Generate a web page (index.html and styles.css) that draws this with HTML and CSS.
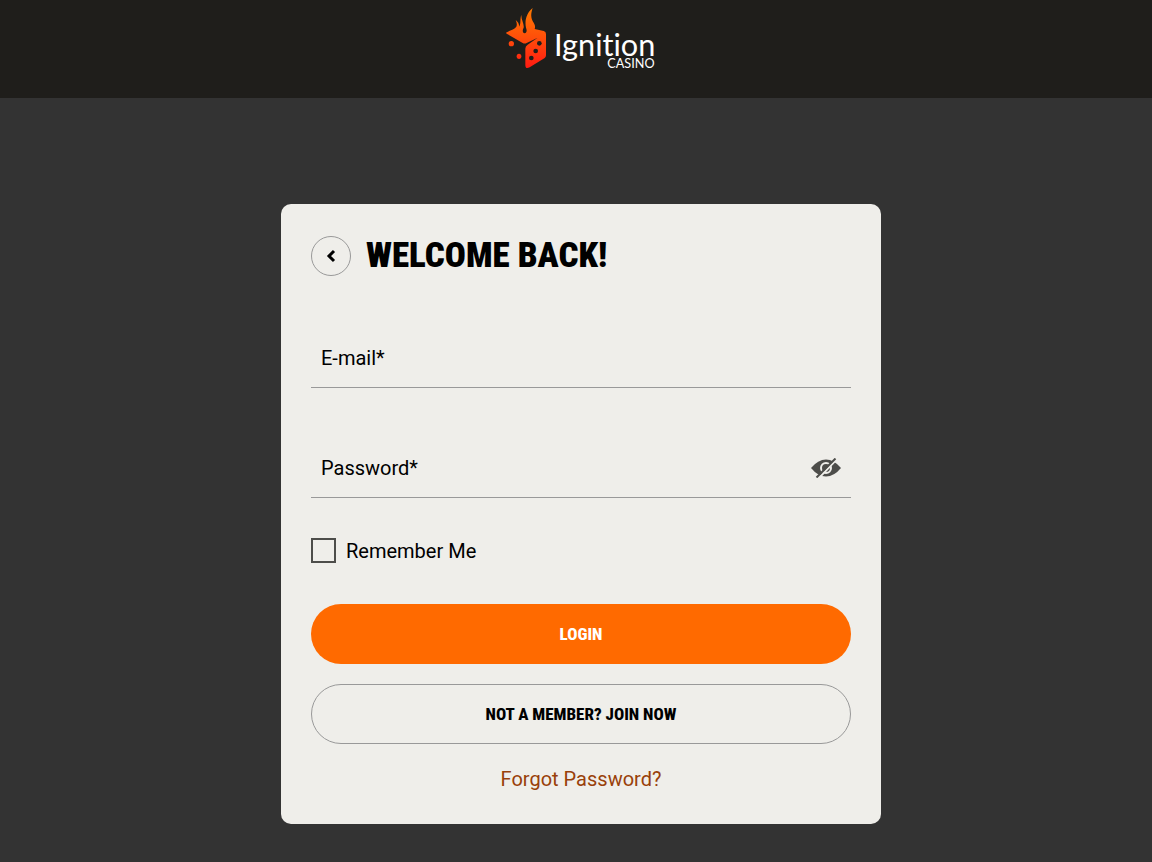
FILE: index.html
```html
<!DOCTYPE html>
<html lang="en">
<head>
  <meta charset="UTF-8">
  <meta name="viewport" content="width=device-width, initial-scale=1.0">
  <title>Login - Ignition Casino</title>
  <link rel="stylesheet" href="styles.css">
</head>
<body>
  <header class="header">
    <svg class="logo" viewBox="30 24 450 180" role="img" aria-label="Ignition Casino">
      <defs>
        <linearGradient id="flame" x1="0" y1="24" x2="0" y2="204" gradientUnits="userSpaceOnUse">
          <stop offset="0" stop-color="#ff7a00"/>
          <stop offset="0.5" stop-color="#ff4d0a"/>
          <stop offset="1" stop-color="#ff1a12"/>
        </linearGradient>
      </defs>
      <g fill="url(#flame)">
        <path d="M30 98C40 91 56 89 61 80C64 73 62 67 59 60C67 67 70 72 69 80C76 70 71 58 76 44C75 60 85 70 83 83C79 90 79 99 86 100C93 99 93 90 90 83C85 60 93 38 110 24C103 44 105 58 113 68C118 76 118 82 116 87L143 93Q150 95 150 102V166Q150 172 145 175L101 202Q88 209 88 195V146Q88 138 95 134L125 113L92 129Q86 132 80 129L32 101Q29 99 30 98Z"/>
        <circle cx="46" cy="131" r="8"/>
        <ellipse cx="69" cy="169" rx="7" ry="8"/>
      </g>
      <g fill="#1f1e1b">
        <circle cx="130" cy="130" r="7"/>
        <circle cx="119" cy="153" r="7"/>
        <circle cx="106" cy="174" r="7"/>
      </g>
      <text class="logo-name" x="174" y="167">Ignition</text>
      <text class="logo-sub" x="334" y="203">CASINO</text>
    </svg>
  </header>
  <main class="container">
    <form class="login-box" onsubmit="return false">
      <div class="title-row">
        <button class="back-btn" type="button" aria-label="Back">
          <svg viewBox="0 0 16 16"><path d="M11 3L6 8L11 13"/></svg>
        </button>
        <h1>WELCOME BACK!</h1>
      </div>
      <div class="field">
        <label for="email">E-mail*</label>
        <input type="email" id="email">
      </div>
      <div class="field">
        <label for="password">Password*</label>
        <input type="password" id="password">
        <button class="eye-btn" type="button" aria-label="Show password">
          <svg viewBox="0 0 30 20">
            <path class="eye" d="M0 10Q7 1.500 15 1.500T30 10Q23 18.500 15 18.500T0 10Z"/>
            <circle class="ring" cx="15" cy="10" r="5"/>
            <path class="gap" d="M7 21L26 1"/>
            <path class="slash" d="M5.500 19.500L24.500 .5"/>
          </svg>
        </button>
      </div>
      <div class="remember">
        <input type="checkbox" id="remember">
        <label for="remember">Remember Me</label>
      </div>
      <div class="actions">
        <button class="btn login-btn" type="submit">LOGIN</button>
        <button class="btn join-btn" type="button">NOT A MEMBER? JOIN NOW</button>
        <a class="forgot" href="#">Forgot Password?</a>
      </div>
    </form>
  </main>
</body>
</html>
```
FILE: styles.css
```css
* {
  box-sizing: border-box;
}
body {
  margin: 0;
  min-height: 100vh;
  background: #333;
  color: #000;
  font-family: Roboto, "Liberation Sans", sans-serif;
  font-size: 20px;
  line-height: 30px;
}
.header {
  display: flex;
  justify-content: center;
  height: 98px;
  padding: 8px 0 0 10px;
  background: #1f1e1b;
}
.logo {
  width: 150px;
  height: 60px;
  overflow: visible;
}
.logo-name,
.logo-sub {
  fill: #fff;
  font-family: Lato, sans-serif;
  font-variant-ligatures: none;
}
.logo-name {
  font-size: 92px;
}
.logo-sub {
  font-size: 38px;
}
.container {
  display: flex;
  justify-content: center;
  padding: 106px 0 38px 10px;
}
.login-box {
  width: 100%;
  max-width: 600px;
  padding: 30px;
  background: #efeeea;
  border-radius: 10px;
}
.title-row {
  display: flex;
  align-items: center;
  gap: 15px;
  height: 44px;
}
.title-row h1 {
  margin: 0;
  font-family: "Roboto Condensed", "Liberation Sans Narrow", sans-serif;
  font-size: 35px;
  font-weight: 900;
  line-height: 44px;
}
.back-btn {
  display: flex;
  align-items: center;
  justify-content: center;
  width: 40px;
  height: 40px;
  padding: 0;
  background: none;
  border: 1px solid #999;
  border-radius: 50%;
  cursor: pointer;
}
.back-btn svg {
  width: 16px;
  height: 16px;
  fill: none;
  stroke: #000;
  stroke-width: 3;
}
.field {
  display: grid;
  grid-template-columns: 1fr auto;
  align-items: center;
  height: 60px;
  margin-top: 50px;
  border-bottom: 1px solid #999;
}
.field label {
  grid-area: 1 / 1;
  padding-left: 10px;
}
.field input {
  grid-area: 1 / 1;
  width: 100%;
  height: 59px;
  padding: 0 10px;
  background: none;
  border: none;
  outline: none;
  font: inherit;
}
/* hide the label once the field is in use */
.field:has(input:focus) label,
.field:has(input:valid:not(:placeholder-shown)):focus-within label {
  opacity: 0;
}
.eye-btn {
  display: flex;
  padding: 0 10px;
  background: none;
  border: none;
  cursor: pointer;
}
.eye-btn svg {
  width: 30px;
  height: 20px;
  fill: none;
}
.eye-btn .eye {
  fill: #4d4d4a;
}
.eye-btn .ring {
  stroke: #efeeea;
  stroke-width: 2;
}
.eye-btn .gap {
  stroke: #efeeea;
  stroke-width: 2;
}
.eye-btn .slash {
  stroke: #4d4d4a;
  stroke-width: 2;
}
.remember {
  display: flex;
  align-items: flex-start;
  gap: 10px;
  height: 26px;
  margin: 40px 0;
  line-height: 26px;
}
.remember input {
  appearance: none;
  width: 25px;
  height: 25px;
  margin: 0;
  border: 2px solid #4d4d4a;
}
.remember input:checked {
  background: #ff6a00;
}
.actions {
  display: flex;
  flex-direction: column;
  gap: 20px;
}
.btn {
  height: 60px;
  border: none;
  border-radius: 30px;
  font-family: "Roboto Condensed", "Liberation Sans Narrow", sans-serif;
  font-size: 17px;
  font-weight: 800;
  cursor: pointer;
}
.login-btn {
  background: #ff6a00;
  color: #fff;
}
.join-btn {
  background: none;
  border: 1px solid #999;
  color: #000;
}
.forgot {
  align-self: center;
  color: #994009;
  text-decoration: none;
}
```
